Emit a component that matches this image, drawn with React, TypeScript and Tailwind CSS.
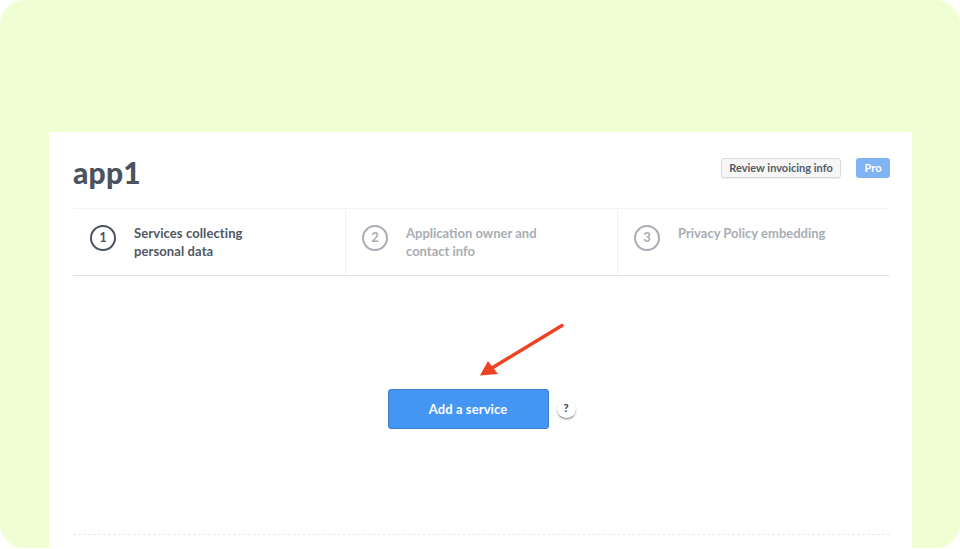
const font = { fontFamily: '"Lato", "Liberation Sans", sans-serif' };

function Step({ n, lines, active, divider, className }: { n: number; lines: string[]; active?: boolean; divider?: boolean; className: string }) {
  return (
    <div className={`${className} flex items-start pt-[16px] ${divider ? "border-l border-[#f1f2f3] pl-[16px]" : "pl-[17px]"}`}>
      <div
        className={`w-[26px] h-[26px] shrink-0 rounded-full border-2 flex items-center justify-center text-[13px] font-bold ${
          active ? "border-[#4b535e] text-[#4b535e]" : "border-[#a9adb3] text-[#a9adb3]"
        }`}
      >
        {n}
      </div>
      <div className={`ml-[18px] -mt-[1px] text-[13px] leading-[18px] font-bold ${active ? "text-[#4f5762] tracking-[0.1px]" : "text-[#a9adb3]"}`}>
        {lines.map((l) => (
          <div key={l}>{l}</div>
        ))}
      </div>
    </div>
  );
}

export default function App() {
  return (
    <div className="w-[960px] h-[549px] bg-white overflow-hidden" style={font}>
      <div className="h-[548px] rounded-[24px] bg-[#efffd3] pt-[132px] pl-[49px] pr-[48px] overflow-hidden">
        <div className="h-full bg-white pl-[24px] pr-[22px] flex flex-col">
          <div className="h-[76px] flex items-center justify-between">
            <h1 className="text-[30px] font-black text-[#4b535e] tracking-[0.2px] leading-none pt-[4px]">app1</h1>
            <div className="flex items-center gap-[15px] -mt-[4px]">
              <button className="h-[20px] w-[120px] rounded-[3px] border border-[#d8dadc] bg-[#f6f6f6] shadow-[0_1px_1px_rgba(0,0,0,0.08)] text-[11px] font-bold text-[#545c66] flex items-center justify-center">
                Review invoicing info
              </button>
              <span className="h-[20px] w-[34px] rounded-[3px] bg-[#7fb3f3] text-white text-[11px] font-bold flex items-center justify-center">
                Pro
              </span>
            </div>
          </div>
          <div className="h-[68px] flex border-t border-t-[#f3f4f5] border-b border-b-[#e3e4e6]">
            <Step className="w-[272px]" n={1} active lines={["Services collecting", "personal data"]} />
            <Step className="w-[272px]" n={2} divider lines={["Application owner and", "contact info"]} />
            <Step className="flex-1" n={3} divider lines={["Privacy Policy embedding"]} />
          </div>
          <div className="h-[259px] border-b border-dashed border-b-[#e9eaeb] flex flex-col items-center relative">
            <svg className="absolute left-[405px] top-[46px]" width="90" height="60" viewBox="0 0 90 60">
              <path d="M84 3.5 L14 46" stroke="#ee4323" strokeWidth="3.5" strokeLinecap="round" fill="none" />
              <path d="M2 53.5 L10 39 L20 52 Z" fill="#ee4323" />
            </svg>
            <div className="flex items-center mt-[113px]">
              <button className="w-[161px] h-[40px] pt-[1px] rounded-[3px] bg-[#4396f3] border border-[#3d7fcb] text-white text-[13px] font-bold tracking-[0.1px]">
                Add a service
              </button>
              <span className="ml-[8px] w-[19px] h-[19px] rounded-full bg-white border-b border-b-[#9a9a9a] shadow-[0_1px_2px_rgba(0,0,0,0.25)] text-[11px] font-black text-[#3f4650] flex items-center justify-center">
                ?
              </span>
            </div>
          </div>
        </div>
      </div>
    </div>
  );
}
